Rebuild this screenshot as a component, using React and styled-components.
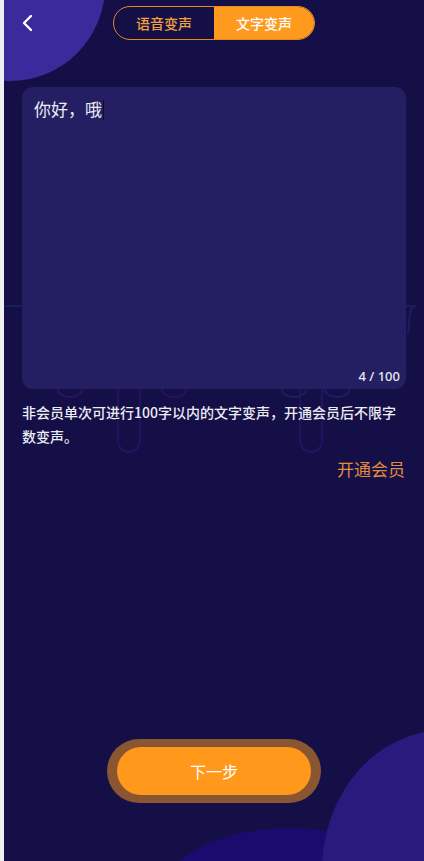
import React, { useState } from 'react';
import styled, { createGlobalStyle } from 'styled-components';

const GlobalStyle = createGlobalStyle`
  html, body {
    margin: 0;
    padding: 0;
    background: #efeef3;
  }
  * { box-sizing: border-box; }
`;

const Screen = styled.div`
  position: relative;
  margin-left: 4px;
  width: 420px;
  height: 861px;
  overflow: hidden;
  background: #140f47;
  display: flex;
  flex-direction: column;
  font-family: "Noto Sans CJK SC", "Noto Sans", sans-serif;
`;

// decorative blobs behind everything
const Blob = styled.div`
  position: absolute;
  border-radius: 50%;
  background: ${p => p.color};
  z-index: 0;
`;

const Deco = styled.svg`
  position: absolute;
  left: 0;
  top: 0;
  z-index: 0;
  pointer-events: none;
`;

const Layer = styled.div`
  position: relative;
  z-index: 1;
  display: flex;
  flex-direction: column;
  flex: 1;
`;

const Header = styled.header`
  display: grid;
  grid-template-columns: 1fr auto 1fr;
  align-items: center;
  padding-top: 6px;
`;

const BackBtn = styled.button`
  justify-self: start;
  margin-left: 12px;
  width: 24px;
  height: 24px;
  padding: 0;
  border: none;
  background: transparent;
  display: flex;
  align-items: center;
  justify-content: center;
  cursor: pointer;
`;

const Tabs = styled.div`
  display: flex;
  width: 202px;
  height: 34px;
  border: 1px solid #e08a22;
  border-radius: 17px;
  overflow: hidden;
`;

const Tab = styled.button`
  flex: 1;
  border: none;
  padding: 0;
  font-family: inherit;
  font-size: 14px;
  font-weight: 500;
  cursor: pointer;
  background: ${p => (p.active ? '#ff9a1f' : 'transparent')};
  color: ${p => (p.active ? '#ffffff' : '#f0a03a')};
`;

const Card = styled.div`
  margin: 47px 18px 0;
  height: 302px;
  border-radius: 11px;
  background: #241f62;
  padding: 10px 6px 5px 12px;
  display: flex;
  flex-direction: column;
`;

const InputText = styled.div`
  flex: 1;
  font-size: 17px;
  line-height: 24px;
  color: #ececf4;
`;

const Caret = styled.span`
  display: inline-block;
  width: 1px;
  height: 20px;
  margin-left: 1px;
  vertical-align: -4px;
  background: #0d0a35;
`;

const Counter = styled.div`
  align-self: flex-end;
  font-size: 13px;
  line-height: 16px;
  font-weight: 500;
  color: #e8e8f0;
  font-family: "Noto Sans", "Noto Sans CJK SC", sans-serif;
`;

const Hint = styled.p`
  margin: 11px 18px 0;
  font-size: 14px;
  line-height: 24px;
  font-weight: 500;
  color: #ececf3;
`;

const VipLink = styled.a`
  align-self: flex-end;
  margin: 9px 19px 0 0;
  font-size: 17px;
  line-height: 24px;
  color: #e38a3c;
  cursor: pointer;
`;

const Spacer = styled.div`
  flex: 1;
`;

const ButtonRing = styled.div`
  align-self: center;
  margin-bottom: 58px;
  padding: 8px 10px;
  border-radius: 40px;
  background: #8a5531;
`;

const NextButton = styled.button`
  display: block;
  width: 194px;
  height: 48px;
  border: none;
  border-radius: 24px;
  background: #ff981b;
  color: #ffffff;
  font-family: inherit;
  font-size: 16px;
  cursor: pointer;
`;

const App = () => {
  const [mode, setMode] = useState('text');
  const text = '你好，哦';

  return (
    <>
      <GlobalStyle />
      <Screen>
        <Blob color="#3a2a9c" style={{ left: -89, top: -109, width: 190, height: 190 }} />
        <Blob color="#1b0b6f" style={{ left: 155, top: 828, width: 262, height: 144 }} />
        <Blob color="#2a1a7e" style={{ left: 318, top: 730, width: 246, height: 280 }} />
        <Deco width="420" height="861" viewBox="0 0 420 861">
          <g fill="none" strokeWidth="2" opacity="0.3">
            <path d="M0 306 H40" stroke="#1d4a7e" />
            <path d="M380 306 H412 Q408 306 406 312 L404 334" stroke="#1d4a7e" />
            <ellipse cx="66" cy="390" rx="12" ry="7" stroke="#6a1e8e" />
            <rect x="114" y="380" width="22" height="72" rx="11" stroke="#3b2198" />
            <ellipse cx="170" cy="390" rx="12" ry="7" stroke="#4b1c9c" />
            <ellipse cx="290" cy="390" rx="12" ry="7" stroke="#1e4b8a" />
            <rect x="296" y="380" width="22" height="72" rx="11" stroke="#3b2198" />
            <ellipse cx="333" cy="390" rx="12" ry="7" stroke="#2a3caa" />
          </g>
        </Deco>
        <Layer>
          <Header>
            <BackBtn aria-label="返回">
              <svg width="14" height="18" viewBox="0 0 14 18">
                <path d="M10 2 L3 9 L10 16" fill="none" stroke="#ffffff" strokeWidth="2.4" strokeLinecap="round" strokeLinejoin="round" />
              </svg>
            </BackBtn>
            <Tabs>
              <Tab active={mode === 'voice'} onClick={() => setMode('voice')}>语音变声</Tab>
              <Tab active={mode === 'text'} onClick={() => setMode('text')}>文字变声</Tab>
            </Tabs>
            <div />
          </Header>
          <Card>
            <InputText>
              {text}
              <Caret />
            </InputText>
            <Counter>{text.length} / 100</Counter>
          </Card>
          <Hint>非会员单次可进行100字以内的文字变声，开通会员后不限字数变声。</Hint>
          <VipLink>开通会员</VipLink>
          <Spacer />
          <ButtonRing>
            <NextButton>下一步</NextButton>
          </ButtonRing>
        </Layer>
      </Screen>
    </>
  );
};

export default App;
